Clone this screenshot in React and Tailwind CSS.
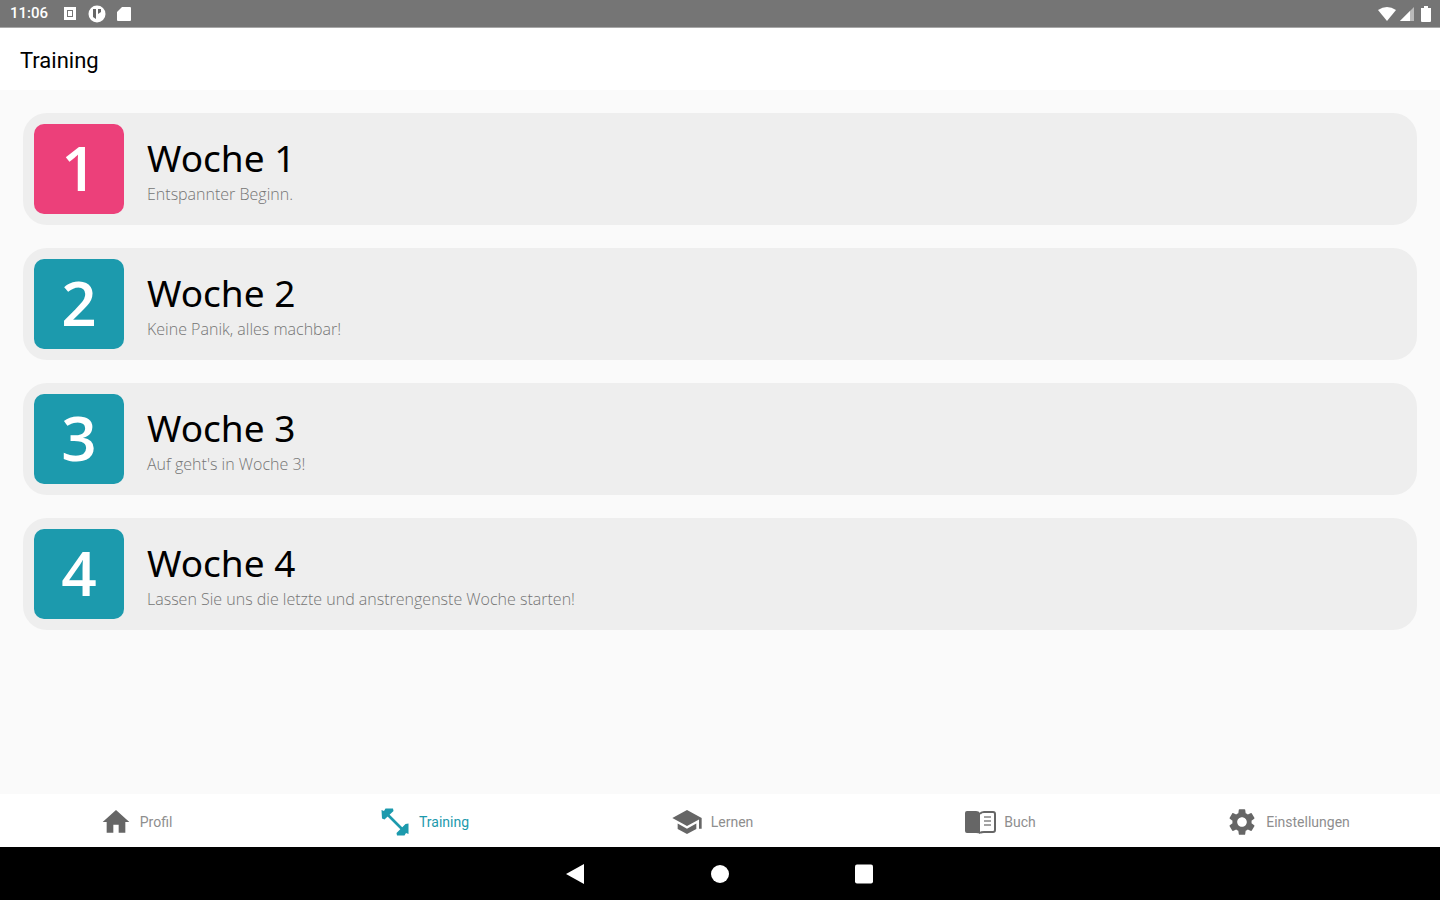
import { MdHome, MdSchool, MdSettings } from "react-icons/md";

const weeks = [
    { id: 1, title: "Woche 1", text: "Entspannter Beginn.", color: "bg-[#ec407a]" },
    { id: 2, title: "Woche 2", text: "Keine Panik, alles machbar!", color: "bg-[#1c9aad]" },
    { id: 3, title: "Woche 3", text: "Auf geht's in Woche 3!", color: "bg-[#1c9aad]" },
    { id: 4, title: "Woche 4", text: "Lassen Sie uns die letzte und anstrengenste Woche starten!", color: "bg-[#1c9aad]" },
];

const tabs = [
    { label: "Profil", icon: MdHome },
    { label: "Training", icon: BarbellIcon, active: true },
    { label: "Lernen", icon: MdSchool },
    { label: "Buch", icon: BookIcon },
    { label: "Einstellungen", icon: MdSettings },
];

function BarbellIcon({ className }) {
    return (
        <svg viewBox="0 0 32 32" className={className} fill="currentColor">
            <path d="M9 9 L24 24" stroke="currentColor" strokeWidth="2.6" />
            <path d="M2.500 4 L5 5 L6.500 2.500 L14 2.500 L14.500 5 L5.500 13.500 L3 12.500 Z" />
            <path d="M29.500 28 L27 27 L25.500 29.500 L18 29.500 L17.500 27 L26.500 18 L29.500 17.500 Z" />
        </svg>
    );
}

function BookIcon({ className }) {
    return (
        <svg viewBox="0 0 32 32" className={className} fill="currentColor">
            <path d="M1 7 Q1 5 3 5 H12 Q15 5 16 7 V28 Q15 27 12 27 H3 Q1 27 1 25 Z" />
            <path fill="none" stroke="currentColor" strokeWidth="2" d="M16 8 Q17 6 20 6 H29 Q31 6 31 8 V24 Q31 26 29 26 H20 Q17 26 16 27" />
            <path d="M20 10h7v2h-7zM20 14h7v2h-7zM20 18h7v2h-7z" opacity=".6" />
        </svg>
    );
}

function StatusBar() {
    return (
        <div className="h-7 shrink-0 bg-[#757575] border-b border-[#a8a8a8] text-white flex items-center justify-between pl-2.5 pr-2">
            <div className="flex items-center gap-2.5">
                <span className="text-[15px] font-medium w-[42px]">11:06</span>
                <svg viewBox="0 0 16 16" className="size-4">
                    <path fill="currentColor" fillRule="evenodd" d="M2 1h12v13H2zM5 4v7h6V4z" />
                    <path fill="currentColor" d="M6 5h4v5H6z" />
                </svg>
                <svg viewBox="0 0 18 18" className="size-[18px]">
                    <circle cx="9" cy="9" r="8.5" fill="currentColor" />
                    <path fill="#666" d="M5 4h3v10L5 12zM10 4h3v3l-3 2z" />
                </svg>
                <svg viewBox="0 0 16 16" className="size-4">
                    <path fill="currentColor" d="M6 1h8a1 1 0 0 1 1 1v12a1 1 0 0 1-1 1H2a1 1 0 0 1-1-1V6z" />
                </svg>
            </div>
            <div className="flex items-center gap-1">
                <svg viewBox="0 0 18 14" className="w-[18px] h-3.5">
                    <path fill="currentColor" d="M0 3Q9-3 18 3L9 14z" />
                </svg>
                <svg viewBox="0 0 14 14" className="size-3.5">
                    <path fill="currentColor" opacity=".5" d="M14 0v14H0z" />
                    <path fill="currentColor" d="M10 4v10H0z" />
                </svg>
                <svg viewBox="0 0 14 16" className="w-3.5 h-4">
                    <path fill="currentColor" d="M6 0h4v2h3v13a1 1 0 0 1-1 1H4a1 1 0 0 1-1-1V2h3z" />
                </svg>
            </div>
        </div>
    );
}

function WeekCard({ week }) {
    return (
        <li>
            <a href={`#woche-${week.id}`} className="flex items-center rounded-3xl bg-[#eeeeee] p-[11px] font-['Open_Sans','Noto_Sans',sans-serif]">
                <span className={`${week.color} size-[90px] shrink-0 rounded-[10px] pb-1 flex items-center justify-center text-white text-[62px] leading-none font-semibold`}>
                    {week.id}
                </span>
                <div className="ml-[23px] pt-1.5">
                    <h2 className="text-[37px] leading-[44px] text-black font-['Noto_Sans',sans-serif]">{week.title}</h2>
                    <p className="text-base leading-7 font-light text-[#757575]">{week.text}</p>
                </div>
            </a>
        </li>
    );
}

function TabBar() {
    return (
        <nav className="h-[53px] shrink-0 bg-white grid grid-cols-5">
            {tabs.map((tab) =>
                <a
                    key={tab.label}
                    href={`#${tab.label.toLowerCase()}`}
                    className={tab.active
                        ? "flex items-center justify-center gap-2 pt-0.5 pr-4 text-sm text-[#1c9aad]"
                        : "flex items-center justify-center gap-2 pt-0.5 pr-4 text-sm text-[#8e8e8e]"}
                >
                    <tab.icon className={tab.active ? "size-8" : "size-8 text-[#666666]"} />
                    {tab.label}
                </a>
            )}
        </nav>
    );
}

function SystemBar() {
    return (
        <div className="h-[53px] shrink-0 bg-black text-white flex items-center justify-center gap-[120px]">
            <button type="button" aria-label="Zurück">
                <svg viewBox="0 0 24 24" className="size-6">
                    <path fill="currentColor" d="M2 12 L20 2 V22 Z" />
                </svg>
            </button>
            <button type="button" aria-label="Startseite">
                <svg viewBox="0 0 24 24" className="size-6">
                    <circle cx="12" cy="12" r="9" fill="currentColor" />
                </svg>
            </button>
            <button type="button" aria-label="Übersicht">
                <svg viewBox="0 0 24 24" className="size-6">
                    <rect x="3" y="2.5" width="18" height="19" rx="2" fill="currentColor" />
                </svg>
            </button>
        </div>
    );
}

function App() {
    return (
        <div className="min-h-screen flex flex-col bg-[#fafafa] font-[Roboto,sans-serif]">
            <StatusBar />
            <header className="h-[62px] shrink-0 bg-white flex items-center px-5 pt-0.5">
                <h1 className="text-[22px] text-black">Training</h1>
            </header>
            <main className="grow px-[23px] py-[23px]">
                <ul className="flex flex-col gap-[23px]">
                    {weeks.map((week) => <WeekCard key={week.id} week={week} />)}
                </ul>
            </main>
            <TabBar />
            <SystemBar />
        </div>
    );
}

export default App;
